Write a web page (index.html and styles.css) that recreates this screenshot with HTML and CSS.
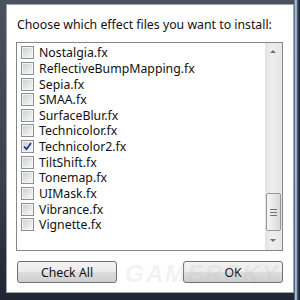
FILE: index.html
```html
<!DOCTYPE html>
<html lang="en">
  <head>
    <meta charset="UTF-8" />
    <title>Install effects</title>
    <link rel="stylesheet" href="styles.css">
  </head>
  <body>
    <div class="window">
      <div class="dialog">
        <p class="prompt">Choose which effect files you want to install:</p>
        <div class="listbox">
          <ul class="items">
            <li><span class="check"></span>Nostalgia.fx</li>
            <li><span class="check"></span>ReflectiveBumpMapping.fx</li>
            <li><span class="check"></span>Sepia.fx</li>
            <li><span class="check"></span>SMAA.fx</li>
            <li><span class="check"></span>SurfaceBlur.fx</li>
            <li><span class="check"></span>Technicolor.fx</li>
            <li>
              <span class="check checked">
                <svg width="9" height="9" viewBox="0 0 9 9">
                  <path d="M1 4.5 L3.5 7.2 L8 1" fill="none" stroke="#1d2f8c" stroke-width="1.7" />
                </svg>
              </span>Technicolor2.fx
            </li>
            <li><span class="check"></span>TiltShift.fx</li>
            <li><span class="check"></span>Tonemap.fx</li>
            <li><span class="check"></span>UIMask.fx</li>
            <li><span class="check"></span>Vibrance.fx</li>
            <li><span class="check"></span>Vignette.fx</li>
          </ul>
          <div class="scrollbar">
            <span class="arrow up"></span>
            <span class="track">
              <span class="thumb"><span class="grip"></span></span>
            </span>
            <span class="arrow down"></span>
          </div>
        </div>
        <div class="buttons">
          <button class="button">Check All</button>
          <button class="button">OK</button>
        </div>
        <div class="watermark">GAMERSKY</div>
      </div>
    </div>
  </body>
</html>
```

FILE: styles.css
```css
body {
  margin: 0;
  font-family: "Noto Sans", "Open Sans", sans-serif;
  font-size: 12.3px;
  color: #111;
}

.window {
  width: 300px;
  height: 300px;
  box-sizing: border-box;
  padding: 5px 7px 8px 7px;
  background:
    linear-gradient(90deg, transparent 294px, #7f9fc4 295px, #c9dcef 296px, #5d7594 297px, #1d2533 299px),
    linear-gradient(180deg, #4a525e 0, #3a424e 60%, #1f2631 100%);
}

.dialog {
  position: relative;
  height: 100%;
  box-sizing: border-box;
  padding-top: 12px;
  background: #fff;
  box-shadow: 0 0 0 1px #9ba3ad;
}

.prompt {
  margin: 0;
  padding-left: 10px;
  line-height: 16px;
}

.listbox {
  display: flex;
  width: 267px;
  height: 209px;
  box-sizing: border-box;
  margin: 9px 0 0 9px;
  border: 1px solid #828790;
}

.items {
  flex: 1;
  list-style: none;
  margin: 0;
  padding: 2px 0 0 4px;
}

.items li {
  display: flex;
  align-items: center;
  gap: 5px;
  height: 15.64px;
  white-space: nowrap;
}

.check {
  display: flex;
  align-items: center;
  justify-content: center;
  width: 13px;
  height: 13px;
  box-sizing: border-box;
  padding: 1px;
  border: 1px solid #8e8f8f;
  background: linear-gradient(135deg, #cdd0d3, #f7f7f7) content-box, #f4f4f4;
}

.scrollbar {
  display: flex;
  flex-direction: column;
  width: 17px;
  background: linear-gradient(90deg, #e3e3e3, #eeeeee 40%, #e6e6e6);
}

.arrow {
  position: relative;
  height: 17px;
}

.arrow::after {
  content: "";
  position: absolute;
  left: 5px;
  top: 7px;
  border-left: 3px solid transparent;
  border-right: 3px solid transparent;
}

.arrow.up::after {
  border-bottom: 3px solid #707070;
}

.arrow.down::after {
  top: 6px;
  border-top: 3px solid #707070;
}

.track {
  flex: 1;
  display: flex;
  flex-direction: column;
  justify-content: flex-end;
  padding-bottom: 2px;
}

.thumb {
  display: flex;
  align-items: center;
  justify-content: center;
  height: 36px;
  margin: 0 1px;
  border: 1px solid #979797;
  border-radius: 2px;
  background: linear-gradient(90deg, #f6f6f6, #e8e8e8 50%, #d9d9d9);
}

.grip {
  width: 7px;
  height: 5px;
  border-top: 1px solid #6f6f6f;
  border-bottom: 1px solid #6f6f6f;
  background: linear-gradient(#6f6f6f, #6f6f6f) center / 100% 1px no-repeat;
}

.buttons {
  display: flex;
  justify-content: space-between;
  padding: 0 10px;
  margin-top: 10px;
}

.button {
  width: 100px;
  height: 22px;
  padding: 0;
  border: 1px solid #707070;
  border-radius: 3px;
  font: inherit;
  color: #111;
  background: linear-gradient(#f3f3f3 0, #ebebeb 50%, #dddddd 50%, #cfcfcf 100%);
}

.watermark {
  position: absolute;
  left: 118px;
  top: 255px;
  font: italic bold 24px "Liberation Sans", sans-serif;
  letter-spacing: 2px;
  color: rgba(190, 190, 190, 0.2);
}
```
